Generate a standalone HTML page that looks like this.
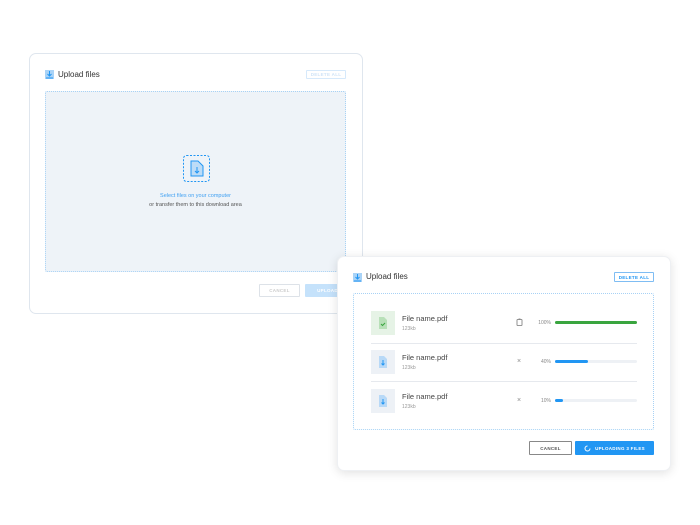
<!DOCTYPE html>
<html><head><style>
*{box-sizing:border-box;margin:0;padding:0}
body{width:700px;height:525px;background:#fff;position:relative;overflow:hidden;font-family:"Liberation Sans",sans-serif}
.a{position:absolute}
.card{position:absolute;background:#fff;border-radius:7px}
.t{font-size:8px;color:#333}
.btn{position:absolute;font-size:4.5px;font-weight:bold;letter-spacing:.3px;display:flex;align-items:center;justify-content:center;border-radius:1px}
.fi{position:absolute;width:24px;height:24px;background:#edf1f6}
.nm{position:absolute;font-size:7.5px;color:#444}
.sz{position:absolute;font-size:5px;color:#999}
.pc{position:absolute;font-size:5px;color:#888;width:20px;text-align:right}
.bar{position:absolute;height:3px;background:#eef1f5;border-radius:2px;width:82px;left:555px}
.bar i{display:block;height:3px;border-radius:2px}
.sep{position:absolute;left:371px;width:266px;height:1px;background:#e6e9ee}
</style></head><body>
<div class="card" style="left:29px;top:53px;width:334px;height:261px;border:1px solid #dfe6ee"></div>
<svg class="a" style="left:45px;top:70px" width="9" height="9"><rect x="0" y="0" width="9" height="9" fill="#a9d3f7"/><path d="M4.5 1v5M2.5 4l2 2 2-2M1 8h7" stroke="#2196f3" fill="none" stroke-width="1"/></svg>
<div class="a t" style="left:58px;top:70px">Upload files</div>
<div class="btn" style="left:306px;top:70px;width:40px;height:9px;border:1px solid #d6e9fb;color:#cfe3f7">DELETE ALL</div>
<div class="a" style="left:45px;top:91px;width:301px;height:181px;background:#eef3f8;border:1px dotted #a8d2f5;border-radius:2px"></div>
<svg class="a" style="left:183px;top:155px" width="27" height="27"><rect x="0.5" y="0.5" width="26" height="26" rx="3" fill="none" stroke="#2196f3" stroke-dasharray="2 1.5"/><path d="M8 6h7l5 5v10H8z" fill="#bcdcf7" stroke="#2196f3" stroke-width="1"/><path d="M14 12v6M12 16l2 2 2-2" stroke="#2196f3" fill="none"/></svg>
<div class="a" style="left:45px;top:193px;width:301px;text-align:center;font-size:5.5px;color:#3fa0f2">Select files on your computer</div>
<div class="a" style="left:45px;top:202px;width:301px;text-align:center;font-size:5.5px;color:#555">or transfer them to this download area</div>
<div class="btn" style="left:259px;top:284px;width:41px;height:13px;border:1px solid #dde2e8;color:#ccc">CANCEL</div>
<div class="btn" style="left:305px;top:284px;width:45px;height:13px;background:#c5e2fb;color:#fff">UPLOAD</div>

<div class="card" style="left:337px;top:256px;width:334px;height:215px;box-shadow:0 2px 10px rgba(0,0,0,.12);border:1px solid #eef0f3"></div>
<svg class="a" style="left:353px;top:273px" width="9" height="9"><rect x="0" y="0" width="9" height="9" fill="#a9d3f7"/><path d="M4.5 1v5M2.5 4l2 2 2-2M1 8h7" stroke="#2196f3" fill="none" stroke-width="1"/></svg>
<div class="a t" style="left:366px;top:272px">Upload files</div>
<div class="btn" style="left:614px;top:272px;width:40px;height:10px;border:1px solid #7fbdf3;color:#2196f3">DELETE ALL</div>
<div class="a" style="left:353px;top:293px;width:301px;height:137px;border:1px dotted #a8d2f5;border-radius:2px"></div>

<div class="fi" style="left:371px;top:311px;background:#e6f3e6"></div>
<svg class="a" style="left:377px;top:316px" width="12" height="14"><path d="M2 1h5l3 3v9H2z" fill="#b8e0b8"/><path d="M4 8l1.5 1.5L8 7" stroke="#3aa53f" fill="none"/></svg>
<div class="nm" style="left:402px;top:314px">File name.pdf</div>
<div class="sz" style="left:402px;top:326px">123kb</div>
<svg class="a" style="left:516px;top:318px" width="7" height="8"><rect x="1" y="1.5" width="5" height="6" rx=".5" fill="none" stroke="#777" stroke-width=".8"/><path d="M2.5 1h2" stroke="#777" stroke-width=".8"/></svg>
<div class="pc" style="left:531px;top:320px">100%</div>
<div class="bar" style="top:321px"><i style="width:82px;background:#3aa53f"></i></div>
<div class="sep" style="top:343px"></div>

<div class="fi" style="left:371px;top:350px"></div>
<svg class="a" style="left:377px;top:355px" width="12" height="14"><path d="M2 1h5l3 3v9H2z" fill="#b8d9f7"/><path d="M6 5v5M4.5 8.5L6 10l1.5-1.5" stroke="#2196f3" fill="none"/></svg>
<div class="nm" style="left:402px;top:353px">File name.pdf</div>
<div class="sz" style="left:402px;top:365px">123kb</div>
<div class="a" style="left:517px;top:358px;font-size:7px;color:#888">×</div>
<div class="pc" style="left:531px;top:359px">40%</div>
<div class="bar" style="top:360px"><i style="width:33px;background:#2196f3"></i></div>
<div class="sep" style="top:381px"></div>

<div class="fi" style="left:371px;top:389px"></div>
<svg class="a" style="left:377px;top:394px" width="12" height="14"><path d="M2 1h5l3 3v9H2z" fill="#b8d9f7"/><path d="M6 5v5M4.5 8.5L6 10l1.5-1.5" stroke="#2196f3" fill="none"/></svg>
<div class="nm" style="left:402px;top:392px">File name.pdf</div>
<div class="sz" style="left:402px;top:404px">123kb</div>
<div class="a" style="left:517px;top:397px;font-size:7px;color:#888">×</div>
<div class="pc" style="left:531px;top:398px">10%</div>
<div class="bar" style="top:399px"><i style="width:8px;background:#2196f3"></i></div>

<div class="btn" style="left:529px;top:441px;width:43px;height:14px;border:1px solid #888;color:#555">CANCEL</div>
<div class="btn" style="left:575px;top:441px;width:79px;height:14px;background:#2196f3;color:#fff"><svg width="7" height="7" style="margin-right:4px"><path d="M3.5 1A2.5 2.5 0 1 0 6 3.5" stroke="#fff" fill="none" stroke-width="1"/></svg>UPLOADING 3 FILES</div>
</body></html>
